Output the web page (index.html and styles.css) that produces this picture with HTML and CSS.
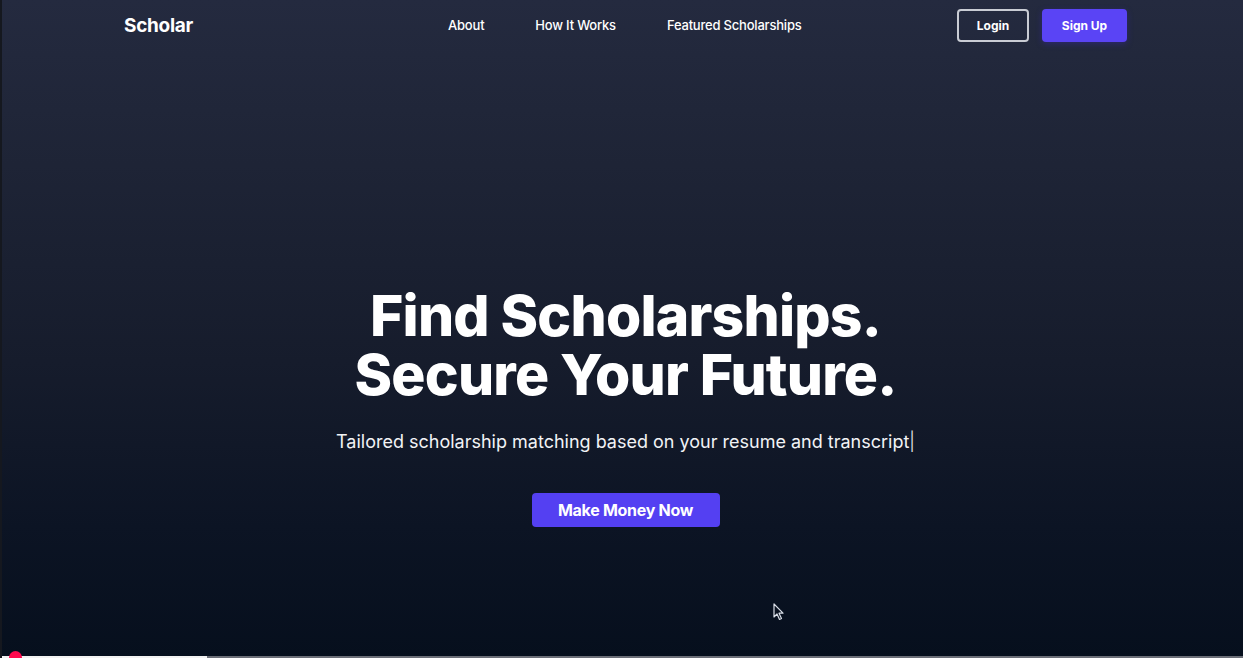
FILE: index.html
```html
<!DOCTYPE html>
<html lang="en">
<head>
<meta charset="utf-8">
<title>Scholar</title>
<link rel="stylesheet" href="styles.css">
</head>
<body>
<div class="page">
  <header class="nav">
    <div class="logo">Scholar</div>
    <nav class="links">
      <a href="#">About</a>
      <a href="#">How It Works</a>
      <a href="#">Featured Scholarships</a>
    </nav>
    <div class="actions">
      <button class="btn-outline">Login</button>
      <button class="btn-primary">Sign Up</button>
    </div>
  </header>
  <main class="hero">
    <h1><span class="line">Find Scholarships.</span><span class="line">Secure Your Future.</span></h1>
    <p class="sub">Tailored scholarship matching based on your resume and transcript<span class="caret">|</span></p>
    <button class="cta">Make Money Now</button>
  </main>
  <svg class="cursor" width="12" height="18" viewBox="0 0 12 18"><path d="M1 1 L1 14 L4 11 L6.5 16.5 L8.5 15.5 L6 10.2 L10 10.2 Z" fill="#0a1220" stroke="#d8dde6" stroke-width="1.2" stroke-linejoin="round"/></svg>
  <div class="progress"><div class="played"></div><div class="knob"></div></div>
</div>
</body>
</html>
```
FILE: styles.css
```css
* { box-sizing: border-box; }
html, body { margin: 0; padding: 0; height: 100%; }
body {
  font-family: "Inter", "Liberation Sans", sans-serif;
  color: #fff;
  background: #0a1220;
}
.page {
  position: relative;
  height: 658px;
  overflow: hidden;
  background: linear-gradient(180deg, #242a3f 0%, #1e2436 25%, #161c2c 55%, #0c1424 80%, #060f1d 100%);
  border-left: 2px solid #15181f;
}
.nav {
  display: flex;
  align-items: center;
  height: 50px;
  padding: 0 116px 0 122px;
}
.logo {
  font-size: 19px;
  font-weight: 700;
  letter-spacing: -0.3px;
  width: 290px;
}
.links {
  display: flex;
  gap: 51px;
  margin-left: 34px;
}
.links a {
  color: #fff;
  text-decoration: none;
  font-size: 13px;
  font-weight: 500;
  letter-spacing: -0.2px;
}
.actions {
  margin-left: auto;
  display: flex;
  gap: 13px;
}
.actions button {
  font-family: inherit;
  font-size: 12px;
  font-weight: 700;
  color: #fff;
  height: 33px;
  border-radius: 4px;
  cursor: pointer;
}
.btn-outline {
  width: 72px;
  background: transparent;
  border: 2px solid #c9ccd4;
}
.btn-primary {
  width: 85px;
  background: #5a44f5;
  border: none;
  box-shadow: 0 2px 6px rgba(60, 40, 200, 0.35);
}
.hero {
  display: flex;
  flex-direction: column;
  align-items: center;
  padding-top: 236px;
  padding-left: 6px;
}
h1 {
  margin: 0;
  display: flex;
  flex-direction: column;
  align-items: center;
  font-size: 57px;
  line-height: 59px;
  font-weight: 800;
  letter-spacing: -0.8px;
  text-align: center;
}
.sub {
  margin: 27px 0 0;
  font-size: 18px;
  font-weight: 400;
  color: #f2f3f6;
}
.caret { font-weight: 300; }
.cta {
  margin-top: 41px;
  width: 188px;
  height: 34px;
  border: none;
  border-radius: 4px;
  background: #5440f2;
  color: #fff;
  font-family: inherit;
  font-size: 16px;
  font-weight: 700;
  letter-spacing: -0.3px;
}
.cursor {
  position: absolute;
  left: 771px;
  top: 603px;
}
.progress {
  position: absolute;
  left: 0;
  right: 0;
  bottom: 0;
  height: 2px;
  background: #6c6f78;
}
.played {
  width: 205px;
  height: 2px;
  background: #f2f2f2;
}
.knob {
  position: absolute;
  left: 7px;
  top: -5px;
  width: 13px;
  height: 13px;
  border-radius: 50%;
  background: #ff0a4e;
}
```
